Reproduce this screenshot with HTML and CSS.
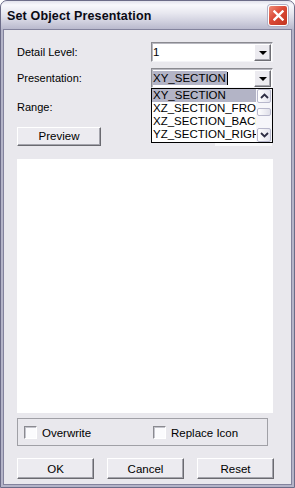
FILE: index.html
```html
<!DOCTYPE html>
<html>
<head>
<meta charset="utf-8">
<title>Set Object Presentation</title>
<link rel="stylesheet" href="styles.css">
</head>
<body>
<div class="window">
  <div class="titlebar">
    <span class="title">Set Object Presentation</span>
    <span class="close">
      <svg width="11" height="11" viewBox="0 0 11 11"><path d="M1.5 1.5 L9.5 9.5 M9.5 1.5 L1.5 9.5" stroke="#fff" stroke-width="2.4" stroke-linecap="square"/></svg>
    </span>
  </div>
  <div class="client">
    <div class="row">
      <span class="label">Detail Level:</span>
      <div class="combo">
        <span class="value">1</span>
        <span class="arrow-btn"><span class="tri"></span></span>
      </div>
    </div>
    <div class="row row2">
      <span class="label">Presentation:</span>
      <div class="combo">
        <span class="value"><span class="hl">XY_SECTION</span><span class="caret"></span></span>
        <span class="arrow-btn"><span class="tri"></span></span>
        <div class="droplist">
          <div class="items">
            <div class="item selected">XY_SECTION</div>
            <div class="item">XZ_SECTION_FRONT</div>
            <div class="item">XZ_SECTION_BACK</div>
            <div class="item">YZ_SECTION_RIGHT</div>
          </div>
          <div class="scrollbar">
            <span class="sb-btn"><svg width="9" height="6" viewBox="0 0 9 6"><path d="M1 5 L4.5 1.5 L8 5" fill="none" stroke="#2e2e44" stroke-width="1.8"/></svg></span>
            <span class="sb-track1"></span>
            <span class="sb-thumb"></span>
            <span class="sb-track2"></span>
            <span class="sb-btn"><svg width="9" height="6" viewBox="0 0 9 6"><path d="M1 1 L4.5 4.5 L8 1" fill="none" stroke="#2e2e44" stroke-width="1.8"/></svg></span>
          </div>
        </div>
      </div>
    </div>
    <div class="row row3">
      <span class="label">Range:</span>
    </div>
    <div class="row row4">
      <button class="btn preview">Preview</button>
      <span class="range-field"></span>
    </div>
    <div class="canvas"></div>
    <div class="group">
      <label class="check c1"><span class="box"></span><span>Overwrite</span></label>
      <label class="check c2"><span class="box"></span><span>Replace Icon</span></label>
    </div>
    <div class="buttons">
      <button class="btn">OK</button>
      <button class="btn">Cancel</button>
      <button class="btn">Reset</button>
    </div>
  </div>
</div>
</body>
</html>
```
FILE: styles.css
```css
* { box-sizing: border-box; }
html, body { margin: 0; padding: 0; background: #ffffff; }
body {
  font-family: "Liberation Sans", Arial, sans-serif;
  font-size: 11px;
  color: #000;
}
.window {
  width: 295px;
  height: 488px;
  display: flex;
  flex-direction: column;
  background: #b4b4c8;
  border: 1px solid #6c6c88;
  border-radius: 7px 7px 0 0;
}
.titlebar {
  height: 28px;
  flex: none;
  display: flex;
  align-items: center;
  justify-content: space-between;
  padding: 0 6px 0 6px;
  border-radius: 6px 6px 0 0;
  background: linear-gradient(#e2e2ec 0px, #f8f8fc 4px, #e8e8f0 12px, #d2d2e0 20px, #b9b9cd 28px);
}
.title {
  font-weight: bold;
  font-size: 12.5px;
  letter-spacing: 0.15px;
  color: #0a0a14;
  padding-top: 1px;
}
.close {
  width: 20px;
  height: 21px;
  margin-top: 1px;
  border: 1px solid #ffffff;
  border-radius: 3px;
  background: linear-gradient(135deg, #ef8c78 0%, #db4a37 45%, #c2341f 100%);
  display: flex;
  align-items: center;
  justify-content: center;
  box-shadow: 0 0 0 1px #b0b0c4;
}
.client {
  flex: 1;
  margin: 0 2px 2px 2px;
  border: 1px solid #83839d;
  background: #e9e8ed;
  padding: 12px 0 5px 13px;
  display: flex;
  flex-direction: column;
}
.row {
  display: flex;
  align-items: center;
  height: 20px;
  flex: none;
}
.row2 { margin-top: 6px; }
.row3 { margin-top: 12px; height: 15px; }
.row4 { margin-top: 12px; height: 19px; align-items: stretch; }
.label {
  width: 134px;
  flex: none;
  line-height: 15px;
}
.combo {
  position: relative;
  width: 122px;
  height: 20px;
  flex: none;
  background: #fff;
  border-style: solid;
  border-width: 1px;
  border-color: #8a8a90 #f4f4f8 #f4f4f8 #8a8a90;
  box-shadow: inset 1px 1px 0 #b8b8c0;
  display: flex;
  align-items: center;
}
.value {
  flex: 1;
  padding-left: 1px;
  display: flex;
  align-items: center;
  font-size: 11.5px;
  line-height: 14px;
  height: 14px;
}
.hl {
  background: #b3b4c6;
  padding: 0 1px 0 0;
}
.caret {
  width: 1px;
  height: 13px;
  background: #000;
}
.arrow-btn {
  width: 17px;
  height: 17px;
  margin-right: 1px;
  background: #ecebf0;
  border-style: solid;
  border-width: 1px;
  border-color: #ffffff #6e6e74 #6e6e74 #ffffff;
  box-shadow: inset -1px -1px 0 #a6a6ae;
  display: flex;
  align-items: center;
  justify-content: center;
}
.tri {
  width: 0;
  height: 0;
  border-left: 4px solid transparent;
  border-right: 4px solid transparent;
  border-top: 4px solid #000;
  margin-top: 1px;
}
.droplist {
  position: absolute;
  left: -1px;
  top: 19px;
  width: 122px;
  height: 55px;
  border: 1px solid #000;
  background: #fff;
  display: flex;
  z-index: 5;
}
.items {
  flex: 1;
  overflow: hidden;
}
.item {
  height: 13px;
  line-height: 13px;
  font-size: 11.5px;
  padding-left: 1px;
  white-space: nowrap;
  overflow: hidden;
}
.item.selected { background: #b3b4c6; }
.scrollbar {
  width: 16px;
  flex: none;
  display: flex;
  flex-direction: column;
  background: #f6f6fa;
}
.sb-btn {
  height: 14px;
  flex: none;
  margin: 0 1px;
  border: 1px solid #b8b8cc;
  border-radius: 2px;
  background: linear-gradient(90deg, #ffffff, #e4e4ee);
  display: flex;
  align-items: center;
  justify-content: center;
}
.sb-track1 { height: 5px; flex: none; }
.sb-thumb {
  height: 8px;
  flex: none;
  margin: 0 1px;
  border: 1px solid #b8b8cc;
  border-radius: 2px;
  background: linear-gradient(90deg, #ffffff, #e0e0ea);
}
.sb-track2 { flex: 1; }
.btn {
  font-family: "Liberation Sans", Arial, sans-serif;
  font-size: 11.5px;
  color: #000;
  background: #ecebf0;
  border-style: solid;
  border-width: 1px;
  border-color: #ffffff #6a6a70 #6a6a70 #ffffff;
  box-shadow: inset -1px -1px 0 #a4a4ac;
  padding: 0;
  margin: 0;
}
.preview {
  width: 84px;
  height: 19px;
  padding-bottom: 1px;
}
.range-field {
  width: 57px;
  margin-left: 114px;
  background: #f8f8fa;
}
.canvas {
  margin-top: 13px;
  width: 256px;
  height: 254px;
  flex: none;
  background: #ffffff;
}
.group {
  margin-top: 5px;
  width: 251px;
  height: 28px;
  flex: none;
  border: 1px solid #a0a0a6;
  display: flex;
  align-items: center;
  padding: 1px 0 0 6px;
}
.check {
  display: flex;
  align-items: center;
  gap: 5px;
  font-size: 11.5px;
}
.c1 { width: 129px; }
.box {
  width: 13px;
  height: 13px;
  background: #fbfbfd;
  border-style: solid;
  border-width: 1px;
  border-color: #8a8a90 #ffffff #ffffff #8a8a90;
  box-shadow: inset 1px 1px 0 #c4c4cc;
}
.buttons {
  margin-top: 12px;
  display: flex;
  gap: 13px;
  flex: none;
}
.buttons .btn {
  width: 77px;
  height: 21px;
}
```
